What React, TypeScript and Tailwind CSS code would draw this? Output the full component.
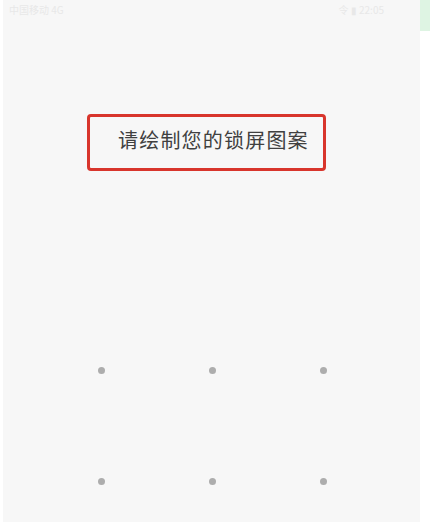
import React from "react";

const dots = Array.from({ length: 9 }, (_, i) => i);

export default function App() {
  return (
    <div className="flex h-[522px] w-[430px] overflow-hidden bg-white font-['Noto_Sans_CJK_SC',sans-serif]">
      {/* phone screen */}
      <div className="ml-[3px] flex h-full w-[417px] shrink-0 flex-col overflow-hidden bg-[#f7f7f7]">
        {/* faint status bar */}
        <div className="flex h-[20px] shrink-0 items-center justify-between px-[6px] text-[10px] leading-[14px] text-[#e8e8e8]">
          <span>中国移动 4G</span>
          <span className="pr-[30px]">令 ▮ 22:05</span>
        </div>

        {/* prompt */}
        <div className="ml-[84px] mt-[94px] flex h-[57px] w-[239px] shrink-0 items-center rounded-[4px] border-[3px] border-[#d8352c] pb-[6px] pl-[28px]">
          <span className="text-[20px] leading-none tracking-[1.2px] text-[#404040]">
            请绘制您的锁屏图案
          </span>
        </div>

        {/* pattern dots */}
        <div className="ml-[95px] mt-[196px] grid shrink-0 grid-cols-[7px_7px_7px] gap-x-[104px] gap-y-[104px]">
          {dots.map((d) => (
            <div key={d} className="h-[7px] w-[7px] rounded-full bg-[#adadad]" />
          ))}
        </div>
      </div>

      {/* right edge */}
      <div className="flex flex-1 flex-col">
        <div className="h-[31px] bg-[#def4e3]" />
      </div>
    </div>
  );
}
